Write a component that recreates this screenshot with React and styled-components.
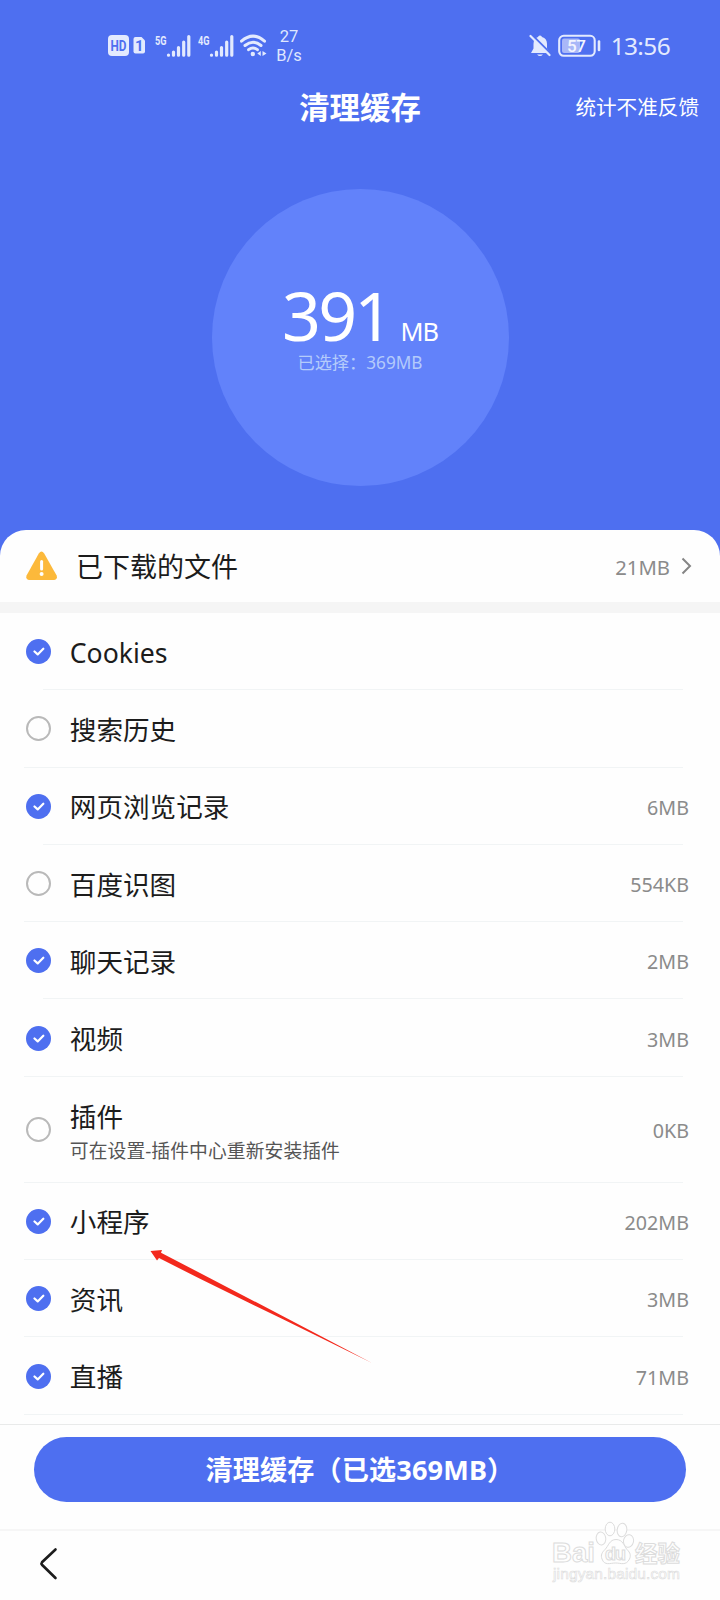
import React from "react";
import styled, { createGlobalStyle } from "styled-components";

const BLUE = "#4e6ff0";

const GlobalStyle = createGlobalStyle`
  *, *::before, *::after { box-sizing: border-box; }
  body {
    margin: 0;
    background: #fefefe;
    font-family: "Noto Sans", "Noto Sans CJK SC", sans-serif;
  }
`;

const Screen = styled.div`
  position: relative;
  display: flex;
  flex-direction: column;
  width: 720px;
  height: 1600px;
  overflow: hidden;
  background: ${BLUE};
  white-space: nowrap;
`;

const StatusBar = styled.div`
  display: flex;
  justify-content: space-between;
  align-items: center;
  height: 72px;
  padding: 20px 50px 0 108px;
  flex: none;
`;

const StatusGroup = styled.div`
  display: flex;
  align-items: center;
`;

const Speed = styled.div`
  width: 34px;
  margin-left: 5px;
  color: #dfe7fe;
  font: 400 16.5px/19px Roboto, sans-serif;
  text-align: center;
`;

const Clock = styled.div`
  margin-left: 9px;
  color: #e3eafe;
  font-size: 24.4px;
  line-height: 26px;
  letter-spacing: -0.6px;
`;

const TitleBar = styled.header`
  display: grid;
  grid-template-columns: 1fr auto 1fr;
  align-items: center;
  height: 72px;
  padding: 0 21px;
  color: #fff;
  flex: none;
`;

const Title = styled.h1`
  grid-column: 2;
  margin: 0;
  font-size: 30.4px;
  font-weight: 700;
  line-height: 40px;
`;

const Feedback = styled.span`
  justify-self: end;
  padding-bottom: 2px;
  font-size: 20.6px;
  line-height: 28px;
`;

const Summary = styled.section`
  display: flex;
  justify-content: center;
  height: 386px;
  padding-top: 45px;
  flex: none;
`;

const Gauge = styled.div`
  display: flex;
  flex-direction: column;
  align-items: center;
  width: 297px;
  height: 297px;
  padding-top: 91px;
  border-radius: 50%;
  background: #6282fa;
`;

const Total = styled.div`
  display: flex;
  align-items: baseline;
  height: 70px;
  color: #fff;
  font-size: 68px;
  line-height: 70px;
  letter-spacing: -2.8px;
`;

const Unit = styled.span`
  margin-left: 10px;
  font-size: 25.4px;
  letter-spacing: -1px;
`;

const Selected = styled.div`
  color: #b4cbfb;
  font-size: 17.2px;
  line-height: 26px;
`;

const Sheet = styled.main`
  display: flex;
  flex-direction: column;
  flex: 1;
  border-radius: 26px 26px 0 0;
  background: #fefefe;
`;

const Downloads = styled.div`
  display: flex;
  align-items: center;
  height: 72px;
  padding: 0 27px 0 26px;
  flex: none;
`;

const DownloadsLabel = styled.span`
  flex: 1;
  margin-left: 18px;
  padding-top: 2px;
  color: #1c1c1c;
  font-size: 27px;
  line-height: 36px;
`;

const Size = styled.span`
  padding-top: ${(p) => (p.$raised ? "1px" : "3px")};
  color: #8b8b8b;
  font-size: ${(p) => (p.$raised ? "20.3px" : "19.7px")};
  line-height: 28px;
`;

const Band = styled.div`
  height: 11px;
  background: #f5f5f5;
  flex: none;
`;

const List = styled.div`
  flex: none;
  height: 811px;
`;

const Row = styled.div`
  display: flex;
  align-items: center;
  height: ${(p) => (p.$tall ? "106px" : "77.3px")};
  padding: 0 31px 0 26px;
  background: linear-gradient(#f1f4f5, #f1f4f5) no-repeat
    ${(p) => (p.$inset ? "43px" : "24px")} 100% / ${(p) => (p.$inset ? "640px" : "659px")} 1px;
`;

const RowText = styled.div`
  flex: 1;
  margin-left: 18.8px;
  padding-top: 2px;
`;

const Name = styled.div`
  color: #1c1c1c;
  font-size: 26.6px;
  line-height: 36px;
`;

const Note = styled.div`
  margin-bottom: -3px;
  padding-top: 2px;
  color: #555;
  font-size: 18.8px;
  line-height: 28px;
  letter-spacing: 0.08px;
`;

const Check = styled.span`
  display: flex;
  align-items: center;
  justify-content: center;
  width: 25px;
  height: 25px;
  border-radius: 50%;
  border: ${(p) => (p.$on ? "0" : "2px solid #b9b9b9")};
  background: ${(p) => (p.$on ? BLUE : "transparent")};
`;

const Actions = styled.div`
  display: flex;
  align-items: flex-start;
  height: 105px;
  padding: 12px 34px 0;
  border-top: 1px solid #e9eaea;
  flex: none;
`;

const ClearButton = styled.button`
  flex: 1;
  height: 65px;
  padding: 1px 0 0;
  border: 0;
  border-radius: 33px;
  background: ${BLUE};
  color: #fff;
  font: 700 27.1px/36px "Noto Sans", "Noto Sans CJK SC", sans-serif;
  letter-spacing: 0.15px;
`;

const NavBar = styled.nav`
  flex: 1;
  padding: 0 39px;
  border-top: 2px solid #f6f6f6;
`;

const BackIcon = styled.svg`
  display: block;
  margin-top: 16px;
`;

const Pointer = styled.svg`
  position: absolute;
  left: 150px;
  top: 1249px;
`;

const Watermark = styled.svg`
  position: absolute;
  left: 545px;
  top: 1515px;
`;

const Signal = ({ label, x }) => (
  <svg width="36" height="24" viewBox="0 0 36 24" style={{ marginLeft: x }}>
    <text x="0" y="10.5" fill="#e3eafe" fontFamily="Roboto" fontWeight="700" fontSize="13" textLength="11.5" lengthAdjust="spacingAndGlyphs">{label}</text>
    <g stroke="#e3eafe" strokeWidth="3.2" strokeLinecap="round">
      <path d="M13.5 21v0.2M18.5 18v3.2M23.5 13.5v7.7M28.7 8v13.2M33.8 2.5v18.7" />
    </g>
  </svg>
);

const ROWS = [
  { name: "Cookies", on: true, inset: true },
  { name: "搜索历史" },
  { name: "网页浏览记录", size: "6MB", on: true, inset: true },
  { name: "百度识图", size: "554KB" },
  { name: "聊天记录", size: "2MB", on: true, inset: true },
  { name: "视频", size: "3MB", on: true },
  { name: "插件", size: "0KB", note: "可在设置-插件中心重新安装插件" },
  { name: "小程序", size: "202MB", on: true },
  { name: "资讯", size: "3MB", on: true },
  { name: "直播", size: "71MB", on: true },
];

export default function App() {
  return (
    <Screen>
      <GlobalStyle />
      <StatusBar>
        <StatusGroup>
          <svg width="38" height="22" viewBox="0 0 38 22">
            <rect x="0" y="0" width="21" height="21" rx="4" fill="#e3eafe" />
            <text x="2.5" y="16" fill={BLUE} fontFamily="Roboto" fontWeight="700" fontSize="15" textLength="16" lengthAdjust="spacingAndGlyphs">HD</text>
            <path d="M27.5 2h6l3.5 3.500v11a2 2 0 0 1-2 2h-7.500a2 2 0 0 1-2-2V4a2 2 0 0 1 2-2z" fill="#e3eafe" />
            <text x="27" y="15.800" fill={BLUE} fontFamily="Roboto" fontWeight="700" fontSize="15">1</text>
          </svg>
          <Signal label="5G" x={9} />
          <Signal label="4G" x={7} />
          <svg width="27" height="24" viewBox="0 0 27 24" style={{ marginLeft: 6 }} fill="none" stroke="#e3eafe" strokeWidth="3" strokeLinecap="round">
            <path d="M1.500 7.200Q13 -3 24.500 7.200M5 11.500q8-6.500 16 0M8.600 15.700q4.400-3.500 8.800 0" />
            <circle cx="12.800" cy="20" r="2.200" fill="#e3eafe" stroke="none" />
            <path d="M20.800 17v5l-3.500-2.500zM22.500 17v5l4-2.500z" fill="#e3eafe" stroke="none" />
          </svg>
          <Speed>
            <div>27</div>
            <div>B/s</div>
          </Speed>
        </StatusGroup>
        <StatusGroup>
          <svg width="23" height="24" viewBox="0 0 23 24">
            <path d="M11 1.500a2 2 0 0 1 2 1.500c3.500 1 5 3.500 5 7v4.500l3 4.500H2l2.500-4.500V10c0-3.500 1.500-6 4.500-7a2 2 0 0 1 2-1.500z" fill="#e3eafe" />
            <path d="M8 20.500h6q-3 3-6 0z" fill="#e3eafe" />
            <path d="M2.500 0.500L22 20" stroke={BLUE} strokeWidth="2.200" />
            <path d="M1.500 2L20.500 21" stroke="#e3eafe" strokeWidth="2.200" strokeLinecap="round" />
          </svg>
          <svg width="44" height="24" viewBox="0 0 44 24" style={{ marginLeft: 6 }}>
            <rect x="1.200" y="1.800" width="35.500" height="20" rx="4.500" fill="none" stroke="#e3eafe" strokeWidth="2.100" />
            <rect x="4" y="4.600" width="18" height="14.400" rx="2" fill="#a9b8f8" />
            <text x="9" y="17.800" fill="#f2f5ff" fontFamily="Roboto" fontWeight="500" fontSize="17" textLength="19">57</text>
            <path d="M41 7.500v8.500" stroke="#e3eafe" strokeWidth="2.600" strokeLinecap="round" />
          </svg>
          <Clock>13:56</Clock>
        </StatusGroup>
      </StatusBar>

      <TitleBar>
        <Title>清理缓存</Title>
        <Feedback>统计不准反馈</Feedback>
      </TitleBar>

      <Summary>
        <Gauge>
          <Total>391<Unit>MB</Unit></Total>
          <Selected>已选择：369MB</Selected>
        </Gauge>
      </Summary>

      <Sheet>
        <Downloads>
          <svg width="32" height="30" viewBox="0 0 32 30">
            <path d="M12.800 2.500q2.700-4 5.400 0L30.500 24.200q1.500 4.300-2.500 4.800H3.200q-4-.5-2.500-4.800z" fill="#fcb93b" />
            <path d="M15.600 10.500v7.500" stroke="#fff" strokeWidth="3" strokeLinecap="round" />
            <circle cx="15.600" cy="23" r="2" fill="#fff" />
          </svg>
          <DownloadsLabel>已下载的文件</DownloadsLabel>
          <Size $raised>21MB</Size>
          <svg width="12" height="18" viewBox="0 0 12 18" style={{ marginLeft: 11 }}>
            <path d="M1.500 1.500L9 9L1.500 16.500" fill="none" stroke="#858585" strokeWidth="2" />
          </svg>
        </Downloads>
        <Band />
        <List>
          {ROWS.map((r) => (
            <Row key={r.name} $tall={!!r.note} $inset={r.inset}>
              <Check $on={r.on}>
                {r.on && (
                  <svg width="12" height="9" viewBox="0 0 12 9" fill="none" stroke="#fff" strokeWidth="2.200" strokeLinecap="round" strokeLinejoin="round">
                    <path d="M1.500 4.500L4.700 7.400L10.300 1.700" />
                  </svg>
                )}
              </Check>
              <RowText>
                <Name>{r.name}</Name>
                {r.note && <Note>{r.note}</Note>}
              </RowText>
              <Size>{r.size}</Size>
            </Row>
          ))}
        </List>
        <Actions>
          <ClearButton>清理缓存（已选369MB）</ClearButton>
        </Actions>
        <NavBar>
          <BackIcon width="20" height="34" viewBox="0 0 20 34">
            <path d="M16.500 2.500L3 15.200q-1 1.300 0 2.600L16.500 31" fill="none" stroke="#1c1c1c" strokeWidth="2.600" strokeLinecap="round" />
          </BackIcon>
        </NavBar>
      </Sheet>

      <Pointer width="224" height="116" viewBox="0 0 224 116">
        <path d="M0.500 2L12 1l-1 2.800L50 24L133 67.200L222 114L133 70.300L50 29.800L9 9L7 11.500z" fill="#f3291d" />
      </Pointer>

      <Watermark width="145" height="75" viewBox="0 0 145 75" fill="#fefefe" stroke="#dcdcdc" strokeWidth="1">
        <text x="7" y="47" fontFamily="Liberation Sans" fontWeight="700" fontSize="28" textLength="43" lengthAdjust="spacingAndGlyphs">Bai</text>
        <ellipse cx="56" cy="23.500" rx="4.800" ry="6.500" transform="rotate(-8 56 23.500)" />
        <ellipse cx="65" cy="14" rx="4.800" ry="6.800" />
        <ellipse cx="77" cy="15" rx="4.800" ry="6.800" transform="rotate(8 77 15)" />
        <ellipse cx="83.500" cy="26" rx="5" ry="6.300" transform="rotate(12 83.500 26)" />
        <path d="M71 24.500c7 0 8 6.500 11 10c3.500 3.500 4 6 2.500 9.500c-3.500 7-8.500 4-14 4s-11 3-13.500-4c-1.500-4 0-6.500 3-9.500c3.500-3.500 4.500-10 11-10z" />
        <text x="60" y="45" fontFamily="Liberation Sans" fontWeight="700" fontSize="18" textLength="21">du</text>
        <text x="90" y="46.500" fontFamily="Noto Sans CJK SC" fontWeight="700" fontSize="22.500">经验</text>
        <text x="8" y="64" fontFamily="Liberation Sans" fontSize="15.500" strokeWidth=".6" textLength="127">jingyan.baidu.com</text>
      </Watermark>
    </Screen>
  );
}
